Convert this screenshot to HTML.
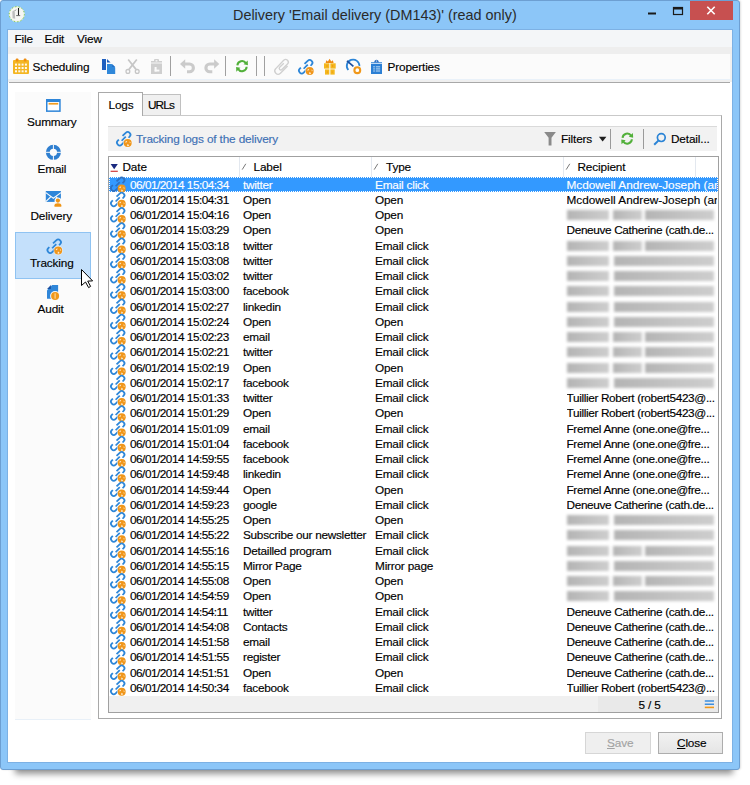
<!DOCTYPE html>
<html><head><meta charset="utf-8">
<style>
*{box-sizing:border-box}
html,body{margin:0;padding:0}
body{width:750px;height:785px;overflow:hidden;position:relative;background:#fff;font-family:"Liberation Sans",sans-serif;font-size:11.8px;letter-spacing:-.15px;color:#000;-webkit-text-stroke-width:.15px}
.a{position:absolute}
.t{position:absolute;white-space:nowrap;line-height:1}
#shadow{position:absolute;left:15px;top:22px;width:718px;height:752px;background:rgba(0,0,0,.42);filter:blur(3px)}
#win{position:absolute;left:0;top:0;width:740px;height:770px;box-shadow:1px 0 2px rgba(0,0,0,.12);background:#8cc6f8;border:1px solid #6d9fd2;border-radius:3px}
#client{position:absolute;left:7px;top:29px;width:726px;height:734px;background:#fff;border:1px solid #7db1e4}
#title{left:233px;top:7.6px;font-size:14.4px;color:#2a2a2a;letter-spacing:0;-webkit-text-stroke-width:0}
#closebtn{position:absolute;left:690px;top:1px;width:43px;height:19px;background:#c75050}
#menubar{left:8px;top:30px;width:724px;height:17px;background:#f4f6f8}
#stripe{left:8px;top:47px;width:724px;height:7px;background:#eeeeee}
#toolbar{left:8px;top:54px;width:722px;height:25px;background:#fbfbfb;border-right:2px solid #f0f0f0;box-sizing:content-box}
#tbline1{left:8px;top:79px;width:724px;height:1px;background:#e9f1f9}
#tbline2{left:8px;top:80px;width:724px;height:2px;background:#efefef}
#tbline3{left:9px;top:82px;width:721px;height:1px;background:#a8a8a8}
.sep{position:absolute;width:1px;background:#a0a0a0}
#side{left:15px;top:92px;width:76px;height:628px;background:#fbfbfb;border-bottom:1px solid #e8f0f8}
#trsel{left:15px;top:232px;width:76px;height:47px;background:#c4e0fb;border:1px solid #8fc3f2}
#panel{left:98px;top:115px;width:624px;height:604px;border:1px solid #a9a9a9;border-top-color:#c9c9c9;background:#fff}
#tablogs{left:98px;top:92px;width:45px;height:24px;background:#fff;border:1px solid #a9a9a9;border-bottom:none}
#taburls{left:142px;top:94px;width:39px;height:21px;background:#f0f0f0;border:1px solid #c0c0c0;border-bottom:none}
#hstrip{left:108px;top:126px;width:609px;height:25px;background:#f2f2f2;border-top:1px solid #dadada}
#grid{left:108px;top:156px;width:611px;height:557px;border:1px solid #a0a0a0;background:#fff;overflow:hidden}
#ghead{left:109px;top:157px;width:609px;height:20px;background:#fff}
.csep{position:absolute;top:157px;width:1px;height:20px;background:#e3e8ef}
#gfoot{left:109px;top:696px;width:609px;height:16px;background:#f0f0f0}
#gfoot2{left:598px;top:696px;width:120px;height:16px;background:#e9e9e9}
.row{position:absolute;left:109px;width:609px;height:15.25px}
.row.sel{background:#3399ff;color:#fff;outline:1px dotted #fff;outline-offset:-1px}
.row .ri{position:absolute;left:1px;top:0px}
.row span{position:absolute;top:2.6px;white-space:nowrap;line-height:1}
.c1{left:21px;letter-spacing:-.5px}
.c2{left:134px;letter-spacing:-.28px}
.c3{left:266px;letter-spacing:-.2px}
.c4{left:457.5px;width:150px;overflow:hidden;letter-spacing:-.35px}
.bl{position:absolute;left:458px;top:2px;width:150px;height:11px;filter:blur(1.7px)}
.bl i{position:absolute;top:.5px;height:10px;background:linear-gradient(90deg,#b4b4b4,#c4c4c4 60%,#cdcdcd)}
.btn{position:absolute;height:22px;border:1px solid #adadad;background:linear-gradient(#f2f2f2,#e5e5e5)}
</style></head><body>
<div id="shadow"></div>
<div id="win"></div>
<div id="client"></div>
<div class="t" id="title">Delivery 'Email delivery (DM143)' (read only)</div>
<div id="closebtn"></div>

<div class="a" id="menubar"></div>
<div class="a" id="stripe"></div>
<div class="a" id="toolbar"></div>
<div class="a" id="tbline1"></div>
<div class="a" id="tbline2"></div>
<div class="a" id="tbline3"></div>
<div class="t" style="left:14.5px;top:33.6px">File</div>
<div class="t" style="left:44.5px;top:33.6px">Edit</div>
<div class="t" style="left:77px;top:33.6px">View</div>
<div class="t" style="left:32.5px;top:61.5px">Scheduling</div>
<div class="t" style="left:387.5px;top:61.5px">Properties</div>
<div class="sep" style="left:170px;top:56px;height:20px"></div>
<div class="sep" style="left:225px;top:56px;height:20px"></div>
<div class="sep" style="left:256px;top:56px;height:20px"></div>
<div class="sep" style="left:264px;top:56px;height:20px"></div>

<div class="a" id="side"></div>
<div class="a" id="trsel"></div>
<div class="t" style="left:27px;top:116.5px">Summary</div>
<div class="t" style="left:37.5px;top:163.5px">Email</div>
<div class="t" style="left:30.5px;top:210.5px">Delivery</div>
<div class="t" style="left:30px;top:258px">Tracking</div>
<div class="t" style="left:37.5px;top:304px">Audit</div>

<div class="a" id="panel"></div>
<div class="a" id="taburls"></div>
<div class="a" id="tablogs"></div>
<div class="t" style="left:108.5px;top:99.5px">Logs</div>
<div class="t" style="left:148px;top:99.5px;letter-spacing:-.9px">URLs</div>

<div class="a" id="hstrip"></div>
<div class="t" style="left:136px;top:133.5px;color:#3d6fb4">Tracking logs of the delivery</div>
<div class="t" style="left:561px;top:133.5px">Filters</div>
<div class="t" style="left:671px;top:133.5px">Detail...</div>
<div class="sep" style="left:610px;top:129px;height:20px;background:#9a9a9a"></div>
<div class="sep" style="left:643px;top:129px;height:20px;background:#9a9a9a"></div>

<div class="a" id="grid"></div>
<div class="a" id="ghead"></div>
<div class="csep" style="left:239px"></div>
<div class="csep" style="left:371px"></div>
<div class="csep" style="left:563px"></div>
<div class="csep" style="left:695px"></div>
<div class="t" style="left:122.5px;top:162px">Date</div>
<div class="t" style="left:253.5px;top:162px">Label</div>
<div class="t" style="left:386px;top:162px">Type</div>
<div class="t" style="left:577.5px;top:162px">Recipient</div>

<div class="row sel" style="top:177.00px">
<span class="c1">06/01/2014 15:04:34</span><span class="c2">twitter</span><span class="c3">Email click</span>
<span class="c4" style="letter-spacing:0">Mcdowell Andrew-Joseph (andrew</span>
</div>
<div class="row" style="top:192.25px">
<span class="c1">06/01/2014 15:04:31</span><span class="c2">Open</span><span class="c3">Open</span>
<span class="c4" style="letter-spacing:0">Mcdowell Andrew-Joseph (andrew</span>
</div>
<div class="row" style="top:207.50px">
<span class="c1">06/01/2014 15:04:16</span><span class="c2">Open</span><span class="c3">Open</span>
<div class="bl"><i style="left:0px;width:42px"></i><i style="left:46px;width:29px"></i><i style="left:78px;width:69px"></i></div>
</div>
<div class="row" style="top:222.75px">
<span class="c1">06/01/2014 15:03:29</span><span class="c2">Open</span><span class="c3">Open</span>
<span class="c4">Deneuve Catherine (cath.de...</span>
</div>
<div class="row" style="top:238.00px">
<span class="c1">06/01/2014 15:03:18</span><span class="c2">twitter</span><span class="c3">Email click</span>
<div class="bl"><i style="left:0px;width:42px"></i><i style="left:46px;width:29px"></i><i style="left:78px;width:69px"></i></div>
</div>
<div class="row" style="top:253.25px">
<span class="c1">06/01/2014 15:03:08</span><span class="c2">twitter</span><span class="c3">Email click</span>
<div class="bl"><i style="left:0px;width:42px"></i><i style="left:47px;width:100px"></i></div>
</div>
<div class="row" style="top:268.50px">
<span class="c1">06/01/2014 15:03:02</span><span class="c2">twitter</span><span class="c3">Email click</span>
<div class="bl"><i style="left:0px;width:42px"></i><i style="left:47px;width:100px"></i></div>
</div>
<div class="row" style="top:283.75px">
<span class="c1">06/01/2014 15:03:00</span><span class="c2">facebook</span><span class="c3">Email click</span>
<div class="bl"><i style="left:0px;width:42px"></i><i style="left:47px;width:100px"></i></div>
</div>
<div class="row" style="top:299.00px">
<span class="c1">06/01/2014 15:02:27</span><span class="c2">linkedin</span><span class="c3">Email click</span>
<div class="bl"><i style="left:0px;width:42px"></i><i style="left:47px;width:100px"></i></div>
</div>
<div class="row" style="top:314.25px">
<span class="c1">06/01/2014 15:02:24</span><span class="c2">Open</span><span class="c3">Open</span>
<div class="bl"><i style="left:0px;width:42px"></i><i style="left:47px;width:100px"></i></div>
</div>
<div class="row" style="top:329.50px">
<span class="c1">06/01/2014 15:02:23</span><span class="c2">email</span><span class="c3">Email click</span>
<div class="bl"><i style="left:0px;width:42px"></i><i style="left:46px;width:29px"></i><i style="left:78px;width:69px"></i></div>
</div>
<div class="row" style="top:344.75px">
<span class="c1">06/01/2014 15:02:21</span><span class="c2">twitter</span><span class="c3">Email click</span>
<div class="bl"><i style="left:0px;width:42px"></i><i style="left:46px;width:29px"></i><i style="left:78px;width:69px"></i></div>
</div>
<div class="row" style="top:360.00px">
<span class="c1">06/01/2014 15:02:19</span><span class="c2">Open</span><span class="c3">Open</span>
<div class="bl"><i style="left:0px;width:42px"></i><i style="left:46px;width:29px"></i><i style="left:78px;width:69px"></i></div>
</div>
<div class="row" style="top:375.25px">
<span class="c1">06/01/2014 15:02:17</span><span class="c2">facebook</span><span class="c3">Email click</span>
<div class="bl"><i style="left:0px;width:42px"></i><i style="left:47px;width:100px"></i></div>
</div>
<div class="row" style="top:390.50px">
<span class="c1">06/01/2014 15:01:33</span><span class="c2">twitter</span><span class="c3">Email click</span>
<span class="c4">Tuillier Robert (robert5423@...</span>
</div>
<div class="row" style="top:405.75px">
<span class="c1">06/01/2014 15:01:29</span><span class="c2">Open</span><span class="c3">Open</span>
<span class="c4">Tuillier Robert (robert5423@...</span>
</div>
<div class="row" style="top:421.00px">
<span class="c1">06/01/2014 15:01:09</span><span class="c2">email</span><span class="c3">Email click</span>
<span class="c4">Fremel Anne (one.one@fre...</span>
</div>
<div class="row" style="top:436.25px">
<span class="c1">06/01/2014 15:01:04</span><span class="c2">facebook</span><span class="c3">Email click</span>
<span class="c4">Fremel Anne (one.one@fre...</span>
</div>
<div class="row" style="top:451.50px">
<span class="c1">06/01/2014 14:59:55</span><span class="c2">facebook</span><span class="c3">Email click</span>
<span class="c4">Fremel Anne (one.one@fre...</span>
</div>
<div class="row" style="top:466.75px">
<span class="c1">06/01/2014 14:59:48</span><span class="c2">linkedin</span><span class="c3">Email click</span>
<span class="c4">Fremel Anne (one.one@fre...</span>
</div>
<div class="row" style="top:482.00px">
<span class="c1">06/01/2014 14:59:44</span><span class="c2">Open</span><span class="c3">Open</span>
<span class="c4">Fremel Anne (one.one@fre...</span>
</div>
<div class="row" style="top:497.25px">
<span class="c1">06/01/2014 14:59:23</span><span class="c2">google</span><span class="c3">Email click</span>
<span class="c4">Deneuve Catherine (cath.de...</span>
</div>
<div class="row" style="top:512.50px">
<span class="c1">06/01/2014 14:55:25</span><span class="c2">Open</span><span class="c3">Open</span>
<div class="bl"><i style="left:0px;width:42px"></i><i style="left:47px;width:100px"></i></div>
</div>
<div class="row" style="top:527.75px">
<span class="c1">06/01/2014 14:55:22</span><span class="c2">Subscribe our newsletter</span><span class="c3">Email click</span>
<div class="bl"><i style="left:0px;width:42px"></i><i style="left:47px;width:100px"></i></div>
</div>
<div class="row" style="top:543.00px">
<span class="c1">06/01/2014 14:55:16</span><span class="c2">Detailled program</span><span class="c3">Email click</span>
<div class="bl"><i style="left:0px;width:42px"></i><i style="left:46px;width:29px"></i><i style="left:78px;width:69px"></i></div>
</div>
<div class="row" style="top:558.25px">
<span class="c1">06/01/2014 14:55:15</span><span class="c2">Mirror Page</span><span class="c3">Mirror page</span>
<div class="bl"><i style="left:0px;width:42px"></i><i style="left:47px;width:100px"></i></div>
</div>
<div class="row" style="top:573.50px">
<span class="c1">06/01/2014 14:55:08</span><span class="c2">Open</span><span class="c3">Open</span>
<div class="bl"><i style="left:0px;width:42px"></i><i style="left:46px;width:29px"></i><i style="left:78px;width:69px"></i></div>
</div>
<div class="row" style="top:588.75px">
<span class="c1">06/01/2014 14:54:59</span><span class="c2">Open</span><span class="c3">Open</span>
<div class="bl"><i style="left:0px;width:42px"></i><i style="left:47px;width:100px"></i></div>
</div>
<div class="row" style="top:604.00px">
<span class="c1">06/01/2014 14:54:11</span><span class="c2">twitter</span><span class="c3">Email click</span>
<span class="c4">Deneuve Catherine (cath.de...</span>
</div>
<div class="row" style="top:619.25px">
<span class="c1">06/01/2014 14:54:08</span><span class="c2">Contacts</span><span class="c3">Email click</span>
<span class="c4">Deneuve Catherine (cath.de...</span>
</div>
<div class="row" style="top:634.50px">
<span class="c1">06/01/2014 14:51:58</span><span class="c2">email</span><span class="c3">Email click</span>
<span class="c4">Deneuve Catherine (cath.de...</span>
</div>
<div class="row" style="top:649.75px">
<span class="c1">06/01/2014 14:51:55</span><span class="c2">register</span><span class="c3">Email click</span>
<span class="c4">Deneuve Catherine (cath.de...</span>
</div>
<div class="row" style="top:665.00px">
<span class="c1">06/01/2014 14:51:51</span><span class="c2">Open</span><span class="c3">Open</span>
<span class="c4">Deneuve Catherine (cath.de...</span>
</div>
<div class="row" style="top:680.25px">
<span class="c1">06/01/2014 14:50:34</span><span class="c2">facebook</span><span class="c3">Email click</span>
<span class="c4">Tuillier Robert (robert5423@...</span>
</div>

<div class="a" id="gfoot"></div>
<div class="a" id="gfoot2"></div>
<div class="t" style="left:638.5px;top:700px">5 / 5</div>

<div class="btn" style="left:585px;top:732px;width:66px;border-color:#d6d6d6;background:#efefef"></div>
<div class="btn" style="left:658px;top:732px;width:65px"></div>
<div class="t" style="left:607px;top:737.5px;color:#a3a3a3"><u>S</u>ave</div>
<div class="t" style="left:677px;top:737.5px"><u>C</u>lose</div>
<svg id="ov" class="a" style="left:0;top:0;pointer-events:none" width="750" height="785" viewBox="0 0 750 785">
<defs>
<symbol id="chain" viewBox="0 0 16 16" overflow="visible">
 <g transform="translate(7.7,7.7) rotate(45)" fill="none" stroke="#2d86d8" stroke-width="1.75">
  <path d="M-2.75 -1.1 V-5.6 A2.75 2.75 0 0 1 2.75 -5.6 V-4.1"/>
  <path d="M0 -2.9 V2.9"/>
  <path d="M2.75 1.1 V5.6 A2.75 2.75 0 0 1 -2.75 5.6 V4.1"/>
 </g>
 <circle cx="11.7" cy="12" r="4.7" fill="#fff" opacity=".6"/>
 <circle cx="11.7" cy="12" r="4" fill="#f0961a"/>
 <path d="M9.2 11.2 q.8-1.5 2-1.2 q-.1 1.2-1.2 1.8 z M11.4 13 q1.3.1 1.7 1.6 q-1 .9-2 .5 z M13.5 10.6 q.9.2 1.2 1.3 l-.9.3 z" fill="#fff3e0" opacity=".9"/>
</symbol>
<symbol id="chainsel" viewBox="0 0 16 16" overflow="visible">
 <g transform="translate(7.7,7.7) rotate(45)" fill="none" stroke="#2f70c0" stroke-width="1.75">
  <path d="M-2.75 -1.1 V-5.6 A2.75 2.75 0 0 1 2.75 -5.6 V-4.1"/>
  <path d="M0 -2.9 V2.9"/>
  <path d="M2.75 1.1 V5.6 A2.75 2.75 0 0 1 -2.75 5.6 V4.1"/>
 </g>
 <circle cx="11.7" cy="12" r="4.7" fill="#fff" opacity="0"/>
 <circle cx="11.7" cy="12" r="4" fill="#f0961a"/>
 <path d="M9.2 11.2 q.8-1.5 2-1.2 q-.1 1.2-1.2 1.8 z M11.4 13 q1.3.1 1.7 1.6 q-1 .9-2 .5 z M13.5 10.6 q.9.2 1.2 1.3 l-.9.3 z" fill="#fff3e0" opacity=".9"/>
</symbol>
<symbol id="refresh" viewBox="0 0 16 16" overflow="visible">
 <g fill="none" stroke="#52b03a" stroke-width="2.3">
  <path d="M1.8 6.4 A5.3 5.3 0 0 1 11.6 3.9"/>
  <path d="M12.4 8 A5.3 5.3 0 0 1 2.6 10.5"/>
 </g>
 <path d="M13.6 0.8 L13.9 6.2 L8.9 5.2 Z" fill="#52b03a"/>
 <path d="M0.6 13.6 L0.3 8.2 L5.3 9.2 Z" fill="#52b03a"/>
</symbol>
</defs>
<!-- titlebar icon -->
<circle cx="16.8" cy="14.2" r="7.5" fill="#f6f6f4" stroke="#e8f4d0" stroke-width="1"/>
<circle cx="16.8" cy="14.2" r="7.6" fill="none" stroke="#6fbf4a" stroke-width="1" stroke-dasharray="1.2 2.2"/>
<path d="M12.3 11.5 L14.6 10 L15.2 18.8 L12.6 18.2 Z" fill="#bdbdbd"/>
<path d="M15 10.8 L16 9.6" stroke="#888" stroke-width="1"/>
<path d="M18.5 8 V15.5" stroke="#222" stroke-width="1.1"/>
<path d="M16.2 15.6 H20.2" stroke="#6a6a6a" stroke-width="1"/>
<!-- window buttons -->
<path d="M648 13.5 H656" stroke="#1a1a1a" stroke-width="2"/>
<rect x="673.5" y="7.5" width="9" height="7" fill="none" stroke="#1a1a1a" stroke-width="1.2"/>
<path d="M673.5 8.5 H682.5" stroke="#1a1a1a" stroke-width="2"/>
<path d="M707.3 6.7 L714.7 14.3 M714.7 6.7 L707.3 14.3" stroke="#fff" stroke-width="1.6"/>
<!-- calendar -->
<rect x="13" y="60" width="16" height="14" rx="1" fill="#f4b623"/>
<rect x="15.8" y="58.5" width="2.6" height="3" rx=".8" fill="#ee8d12"/>
<rect x="23.8" y="58.5" width="2.6" height="3" rx=".8" fill="#ee8d12"/>
<g fill="#fff" opacity=".92">
<rect x="15" y="63.6" width="2" height="2"/><rect x="18.3" y="63.6" width="2" height="2"/><rect x="21.6" y="63.6" width="2" height="2"/><rect x="24.9" y="63.6" width="2" height="2"/>
<rect x="15" y="67" width="2" height="2"/><rect x="18.3" y="67" width="2" height="2"/><rect x="21.6" y="67" width="2" height="2"/><rect x="24.9" y="67" width="2" height="2"/>
<rect x="15" y="70.3" width="2" height="2"/><rect x="18.3" y="70.3" width="2" height="2"/><rect x="21.6" y="70.3" width="2" height="2"/><rect x="24.9" y="70.3" width="2" height="2"/>
</g>
<!-- copy -->
<rect x="102" y="59" width="4" height="11" fill="#1f5fbf"/>
<path d="M107 59 L110.6 62.6 L107 62.6 Z" fill="#1f5fbf"/>
<path d="M107 64 L111.6 64 L115.2 67.6 L115.2 74 L107 74 Z" fill="#3088da"/>
<path d="M112.2 64 L115.2 67 L112.2 67 Z" fill="#2370c8"/>
<!-- scissors -->
<g stroke="#c6c6c6" fill="none">
<path d="M128.2 59.5 L136 69.4 M136.8 59.5 L129 69.4" stroke-width="1.7"/>
<circle cx="127.9" cy="71.4" r="1.9" stroke-width="1.3"/><circle cx="137.2" cy="71.4" r="1.9" stroke-width="1.3"/>
</g>
<!-- clipboard gray -->
<rect x="151" y="61" width="11" height="13" fill="#cfcfcf"/>
<rect x="154" y="59" width="5" height="4" rx="1" fill="#cfcfcf"/>
<rect x="155.6" y="60.2" width="1.8" height="1.3" fill="#fbfbfb"/>
<path d="M151 63 H162" stroke="#fbfbfb" stroke-width=".9"/>
<rect x="154.6" y="67" width="2" height="4.5" fill="#fbfbfb"/><rect x="154.6" y="69.6" width="4.8" height="1.9" fill="#fbfbfb"/>
<!-- undo/redo -->
<g fill="#cbcbcb">
<path d="M180 64 L185.2 59.3 L185.2 68.7 Z"/>
<path d="M219.3 64 L214.1 59.3 L214.1 68.7 Z"/>
</g>
<g fill="none" stroke="#cbcbcb" stroke-width="3.1">
<path d="M184 64 H189.5 A3.9 3.9 0 0 1 189.5 71.8 H187"/>
<path d="M215.3 64 H209.8 A3.9 3.9 0 0 0 209.8 71.8 H212.3"/>
</g>
<!-- refresh -->
<use href="#refresh" x="235.8" y="59.8" width="14" height="14"/>
<!-- paperclip -->
<path d="M287.6 66 L280.4 73.2 A3.25 3.25 0 0 1 275.8 68.6 L283.7 60.3 A2.65 2.65 0 0 1 287.5 64.1 L281.9 69.5 A1.55 1.55 0 0 1 279.7 67.3 L283.8 63.2" fill="none" stroke="#d0d0d0" stroke-width="1.35"/>
<!-- chain toolbar -->
<use href="#chain" x="298" y="59" width="16" height="16"/>
<!-- gift -->
<path d="M325.6 62.9 L326.3 60.2 L327.9 61.4 L329.6 58.7 L331.3 61.4 L332.9 60.2 L333.6 62.9 Z" fill="#ef8b12"/>
<rect x="324" y="63.3" width="11.7" height="5.3" fill="#f4b81e"/>
<rect x="325" y="69.4" width="9.7" height="5.2" fill="#f4b81e"/>
<rect x="329.3" y="63" width="1.1" height="12" fill="#fbfbfb"/><circle cx="327" cy="66" r=".7" fill="#ef8b12"/><circle cx="332.6" cy="66" r=".7" fill="#ef8b12"/><circle cx="327.4" cy="72" r=".6" fill="#ef8b12"/><circle cx="332.2" cy="72" r=".6" fill="#ef8b12"/>
<!-- gauge -->
<path d="M348.3 70 A6.3 6.3 0 1 1 359.4 66.2" fill="none" stroke="#2b84d6" stroke-width="1.8"/>
<path d="M347 60.8 L353.4 66.3" stroke="#1d4fa0" stroke-width="1.7"/>
<circle cx="357.3" cy="70.2" r="4.6" fill="#fbfbfb"/>
<circle cx="357.3" cy="70.2" r="2.9" fill="#fff" stroke="#f0981a" stroke-width="2.1"/>
<!-- properties -->
<rect x="371" y="62.2" width="11" height="11.8" fill="#2b7fd4"/>
<path d="M373.8 62.6 L375 60.6 A1.8 1.8 0 0 1 378 60.6 L379.2 62.6 Z" fill="#2b6fc4"/>
<circle cx="376.5" cy="61" r=".6" fill="#fff"/>
<path d="M371 63.4 H382" stroke="#e9f1fa" stroke-width=".9"/>
<g fill="#a9cdf0"><rect x="373.2" y="66.2" width="1.7" height="1.2"/><rect x="375.8" y="66.2" width="4.3" height="1.2"/><rect x="373.2" y="68.3" width="1.7" height="1.2"/><rect x="375.8" y="68.3" width="4.3" height="1.2"/><rect x="373.2" y="70.4" width="1.7" height="1.2"/><rect x="375.8" y="70.4" width="4.3" height="1.2"/></g>

<!-- sidebar icons -->
<rect x="46" y="99" width="14.7" height="12.9" fill="#2f86d9"/>
<rect x="47.5" y="102" width="11.7" height="8.4" fill="#fff"/>
<rect x="48.6" y="102.9" width="9.6" height="1.7" fill="#f29c1f"/>

<circle cx="53.4" cy="152.3" r="5.6" fill="none" stroke="#2f7fd0" stroke-width="3.9"/>
<rect x="52.9" y="144.4" width="1" height="15.8" fill="#fafafa"/>
<rect x="45.5" y="151.8" width="15.8" height="1" fill="#fafafa"/>

<rect x="45.8" y="191" width="15.1" height="10.9" fill="#2f86d9"/>
<path d="M45.8 192.6 L53.35 198.3 L60.9 192.6 M45.8 201.6 L50.6 197 M60.9 201.6 L56.1 197" fill="none" stroke="#fafafa" stroke-width="1.1"/>
<circle cx="57.9" cy="201" r="3.4" fill="#fafafa"/>
<path d="M53.6 207.3 V205 Q53.6 202.3 57.9 202.3 Q62.2 202.3 62.2 205 V207.3 Z" fill="#fafafa"/>
<circle cx="57.9" cy="200.6" r="2.1" fill="#ef9414"/>
<path d="M54.5 206.7 V205.2 Q54.5 203.2 57.9 203.2 Q61.3 203.2 61.3 205.2 V206.7 Z" fill="#ef9414"/>

<use href="#chain" x="46.5" y="238.5" width="16" height="16"/>

<path d="M52.2 285 H58.1 V298.7 H47 V290.3 Z" fill="#2f86d9"/>
<path d="M47.1 288.9 L50.9 285.1 V288.9 Z" fill="#1a4fa0"/>
<circle cx="55.1" cy="296" r="5" fill="#fafafa"/>
<circle cx="55.1" cy="296" r="4" fill="#f0981a"/>
<path d="M55.1 293.3 V298.7" stroke="#fce0b0" stroke-width="1"/>

<!-- header strip icons -->
<use href="#chain" x="116" y="131" width="16" height="16"/>
<path d="M544.2 132.1 H555.9 L551.5 137.8 V145.6 H548.6 V137.8 Z" fill="#8a8a8a"/>
<path d="M598.9 136.7 H606.4 L602.65 141.4 Z" fill="#1e1e1e"/>
<use href="#refresh" x="621" y="132.3" width="14" height="14"/>
<circle cx="661.3" cy="137.6" r="3.9" fill="none" stroke="#2b84d6" stroke-width="1.7"/>
<path d="M658.6 140.4 L654.2 144.8" stroke="#2b84d6" stroke-width="2"/>

<!-- grid header -->
<path d="M110.6 164 H117.8 L114.2 169.2 Z" fill="#1a2a80"/>
<path d="M110.6 171.3 H117.8" stroke="#d03a3a" stroke-width="1.2"/>
<g stroke="#6a6a6a" stroke-width=".9"><path d="M242.2 169.6 L245.8 163.8 M374.2 169.6 L377.8 163.8 M566.2 169.6 L569.8 163.8"/></g>

<!-- footer icon -->
<path d="M704.8 701 H714 M704.8 704.2 H714" stroke="#3b8ee0" stroke-width="1.6"/>
<path d="M704.8 707.4 H714" stroke="#f0981a" stroke-width="1.6"/>

<!-- cursor -->
<path d="M81.5 269.5 V285.5 L85.5 282 L88.6 287.6 L90.6 286.4 L87.7 281.1 L92.6 280.9 Z" fill="#fff" stroke="#000" stroke-width="1" stroke-linejoin="miter"/>
<use href="#chainsel" x="110" y="176.50" width="16" height="16"/>
<use href="#chain" x="110" y="191.75" width="16" height="16"/>
<use href="#chain" x="110" y="207.00" width="16" height="16"/>
<use href="#chain" x="110" y="222.25" width="16" height="16"/>
<use href="#chain" x="110" y="237.50" width="16" height="16"/>
<use href="#chain" x="110" y="252.75" width="16" height="16"/>
<use href="#chain" x="110" y="268.00" width="16" height="16"/>
<use href="#chain" x="110" y="283.25" width="16" height="16"/>
<use href="#chain" x="110" y="298.50" width="16" height="16"/>
<use href="#chain" x="110" y="313.75" width="16" height="16"/>
<use href="#chain" x="110" y="329.00" width="16" height="16"/>
<use href="#chain" x="110" y="344.25" width="16" height="16"/>
<use href="#chain" x="110" y="359.50" width="16" height="16"/>
<use href="#chain" x="110" y="374.75" width="16" height="16"/>
<use href="#chain" x="110" y="390.00" width="16" height="16"/>
<use href="#chain" x="110" y="405.25" width="16" height="16"/>
<use href="#chain" x="110" y="420.50" width="16" height="16"/>
<use href="#chain" x="110" y="435.75" width="16" height="16"/>
<use href="#chain" x="110" y="451.00" width="16" height="16"/>
<use href="#chain" x="110" y="466.25" width="16" height="16"/>
<use href="#chain" x="110" y="481.50" width="16" height="16"/>
<use href="#chain" x="110" y="496.75" width="16" height="16"/>
<use href="#chain" x="110" y="512.00" width="16" height="16"/>
<use href="#chain" x="110" y="527.25" width="16" height="16"/>
<use href="#chain" x="110" y="542.50" width="16" height="16"/>
<use href="#chain" x="110" y="557.75" width="16" height="16"/>
<use href="#chain" x="110" y="573.00" width="16" height="16"/>
<use href="#chain" x="110" y="588.25" width="16" height="16"/>
<use href="#chain" x="110" y="603.50" width="16" height="16"/>
<use href="#chain" x="110" y="618.75" width="16" height="16"/>
<use href="#chain" x="110" y="634.00" width="16" height="16"/>
<use href="#chain" x="110" y="649.25" width="16" height="16"/>
<use href="#chain" x="110" y="664.50" width="16" height="16"/>
<use href="#chain" x="110" y="679.75" width="16" height="16"/>
</svg>

</body></html>
